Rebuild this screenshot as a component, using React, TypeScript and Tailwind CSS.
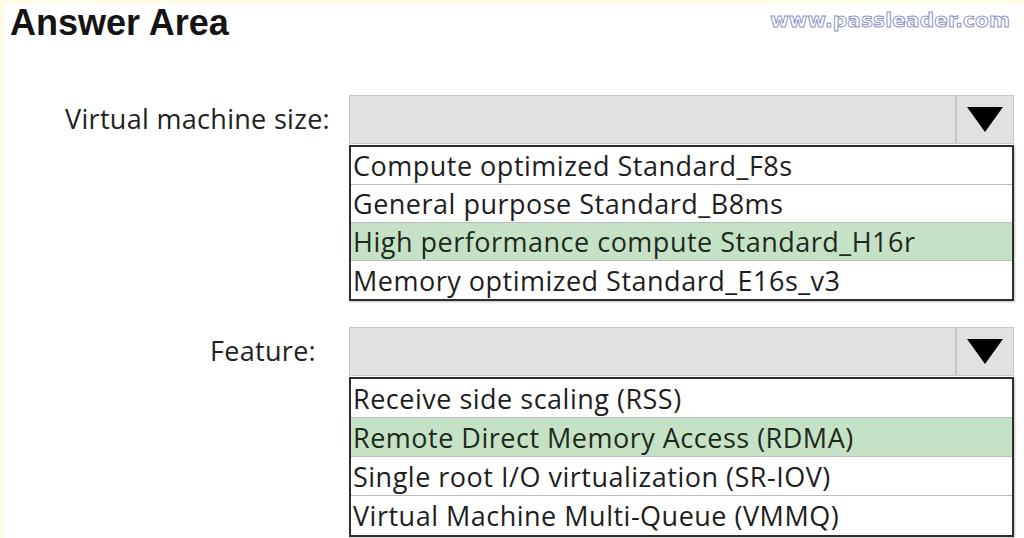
import React from 'react';

const vmSizes = [
  { label: 'Compute optimized Standard_F8s' },
  { label: 'General purpose Standard_B8ms' },
  { label: 'High performance compute Standard_H16r', picked: true },
  { label: 'Memory optimized Standard_E16s_v3' },
];

const features = [
  { label: 'Receive side scaling (RSS)' },
  { label: 'Remote Direct Memory Access (RDMA)', picked: true },
  { label: 'Single root I/O virtualization (SR-IOV)' },
  { label: 'Virtual Machine Multi-Queue (VMMQ)' },
];

type Option = { label: string; picked?: boolean };

function Dropdown({ options, tall }: { options: Option[]; tall?: boolean }) {
  return (
    <div className="w-[665px] flex flex-col">
      <div className="h-[49px] flex bg-[#e1e1e1] border border-[#c9c9c9]">
        <div className="flex-1" />
        <div className="w-[58px] border-l-2 border-[#c4c4c4] flex items-center justify-center">
          <svg width="36" height="25" viewBox="0 0 36 25">
            <polygon points="0,0 36,0 18,25" fill="#000" />
          </svg>
        </div>
      </div>
      <div className="mt-[1px] border-2 border-[#2e2e2e] bg-white divide-y divide-[#bdbdbd] shadow-[1px_1px_2px_rgba(0,0,0,0.25)]">
        {options.map((o) => (
          <div
            key={o.label}
            className={`${tall ? 'h-[39px]' : 'h-[38px]'} flex items-center pl-[2px] text-[27px] tracking-[0.5px] leading-none ${
              o.picked ? 'bg-[#c6e2c6] text-[#1c2a1c]' : 'text-[#1e1e1e]'
            }`}
          >
            {o.label}
          </div>
        ))}
      </div>
    </div>
  );
}

export default function App() {
  return (
    <div
      className="relative w-[1024px] h-[538px] overflow-hidden bg-white border-t-[3px] border-l-[4px] border-[#fdfbe4] flex flex-col"
      style={{ fontFamily: '"Open Sans", Lato, sans-serif' }}
    >
      <h1 className="pl-[6px] text-[36px] leading-[40px] font-bold text-[#141414] font-['Liberation_Sans',Arial,sans-serif]">
        Answer Area
      </h1>
      <div className="absolute top-[2px] right-[14px] text-[20px] font-bold tracking-[0.2px] text-white [-webkit-text-stroke:1px_#8d93c6] font-['DejaVu_Sans',sans-serif]">
        www.passleader.com
      </div>

      <div className="mt-[52px] flex items-start">
        <div className="w-[345px] h-[49px] flex items-center justify-end pr-[19px] text-[27px] tracking-[0.3px] text-[#222]">
          Virtual machine size:
        </div>
        <Dropdown options={vmSizes} />
      </div>

      <div className="mt-[26px] flex items-start">
        <div className="w-[345px] h-[49px] flex items-center justify-end pr-[33px] text-[27px] tracking-[0.3px] text-[#222]">
          Feature:
        </div>
        <Dropdown options={features} tall />
      </div>
    </div>
  );
}
